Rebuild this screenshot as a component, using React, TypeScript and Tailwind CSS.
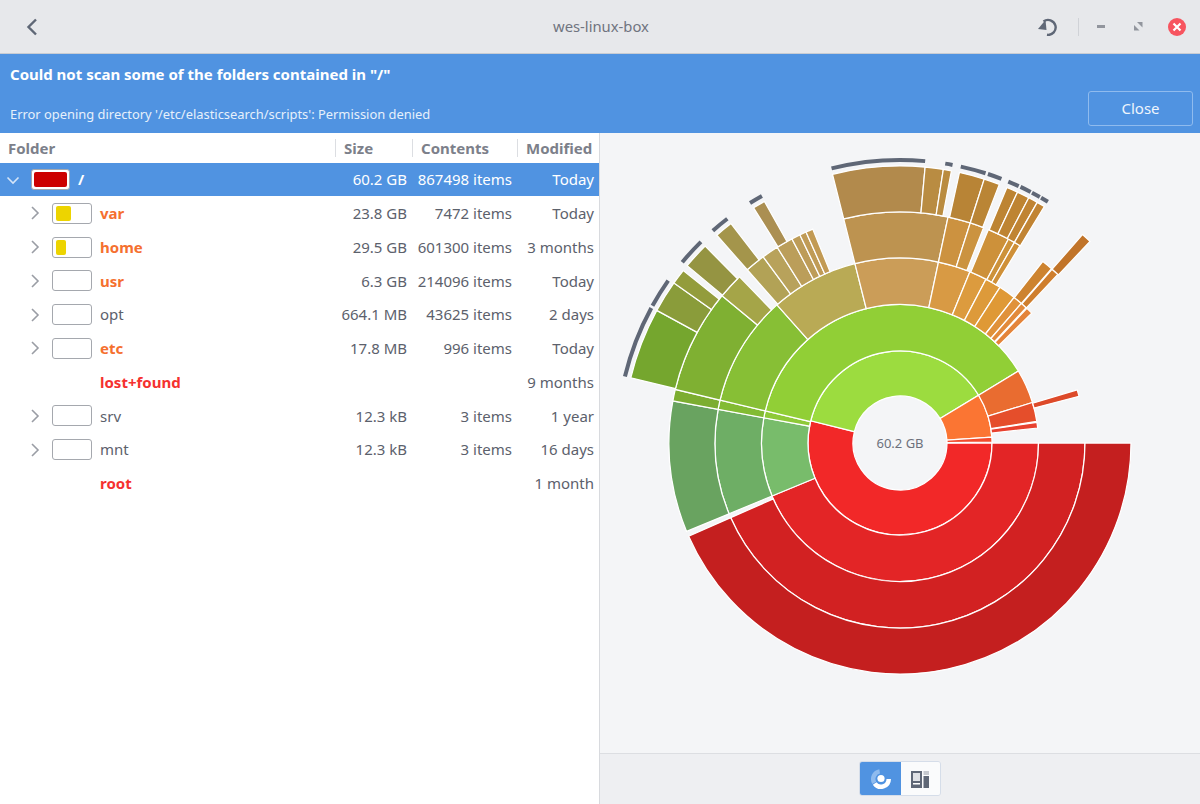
import React from "react";

// [r0, r1, startDeg, endDeg, fill] angles counter-clockwise from east
type Seg = [number, number, number, number, string];

const segs: Seg[] = [
  // ring 1
  [47, 92, 166, 360, "#f22828"],
  [47, 92, 31.3, 166, "#9cdc3f"],
  [47, 92, 3.6, 31.3, "#fb7533"],
  [47, 92, 0.5, 3.6, "#f24a2c"],
  // ring 2
  [92, 138.5, 202.5, 360, "#e32526"],
  [92, 138.5, 169.5, 202.5, "#78bc6b"],
  [92, 138.5, 166.6, 169.5, "#8ec938"],
  [92, 138.5, 31.3, 166.6, "#91cf36"],
  [92, 138.5, 17, 31.3, "#e96c30"],
  [92, 138.5, 9, 17, "#e54e2b"],
  [92, 138.5, 6.2, 8.6, "#e8412f"],
  // ring 3
  [138.5, 185, 203.8, 360, "#d22122"],
  [138.5, 185, 169.5, 202.5, "#6eae65"],
  [138.5, 185, 166.6, 169.5, "#82bb33"],
  [138.5, 185, 131.7, 166.6, "#87bf35"],
  [138.5, 185, 104.1, 131.7, "#b9aa55"],
  [138.5, 185, 78, 104.1, "#cb9d58"],
  [138.5, 185, 67.8, 78, "#d89a44"],
  [138.5, 185, 62.3, 67.8, "#dc9b3e"],
  [138.5, 185, 57.3, 62.3, "#dd9a3a"],
  [138.5, 185, 51.9, 57.3, "#df9936"],
  [138.5, 185, 49, 51.9, "#e0913a"],
  [138.5, 185, 47, 49, "#e28a3b"],
  [138.5, 185, 44.6, 46.7, "#e4843a"],
  [138.5, 185, 14.6, 16.7, "#dd4a2a"],
  // ring 4
  [185, 231, 203.8, 360, "#c41f1f"],
  [185, 231, 169.5, 202.5, "#69a360"],
  [185, 231, 166.6, 169.5, "#7cad30"],
  [185, 231, 140.4, 166.6, "#7fb032"],
  [185, 231, 134, 140.4, "#a5a548"],
  [185, 231, 126.3, 131.4, "#b2a256"],
  [185, 231, 122.1, 126.3, "#b8a25b"],
  [185, 231, 117.9, 122.1, "#bb9e5a"],
  [185, 231, 115.7, 117.9, "#bd9c58"],
  [185, 231, 114, 115.7, "#c09b56"],
  [185, 231, 112.2, 114, "#c29a54"],
  [185, 231, 78, 104.1, "#bd9350"],
  [185, 231, 72.3, 78, "#cc9240"],
  [185, 231, 68.8, 72.3, "#cb9340"],
  [185, 231, 62, 67.5, "#cd913a"],
  [185, 231, 60.3, 62, "#cd923a"],
  [185, 231, 58.7, 60.3, "#cf9038"],
  [185, 231, 49, 51.8, "#cd832f"],
  [185, 231, 46.9, 48.8, "#cf7e2d"],
  // ring 5
  [231, 277, 151.4, 166.4, "#75a62e"],
  [231, 277, 144.7, 151.4, "#8a9c3a"],
  [231, 277, 141.5, 144.7, "#939c3c"],
  [231, 277, 134.7, 140.2, "#959442"],
  [231, 277, 127.6, 131.4, "#a4954b"],
  [231, 277, 119.3, 121.9, "#ab8f52"],
  [231, 277, 84.8, 104.1, "#b28a4c"],
  [231, 277, 81, 84.8, "#b98c42"],
  [231, 277, 79.3, 81, "#ba8c40"],
  [231, 277, 72.3, 77.6, "#b88436"],
  [231, 277, 69, 72.3, "#ba8535"],
  [231, 277, 64.9, 67.3, "#bd8432"],
  [231, 277, 62.3, 64.9, "#be8432"],
  [231, 277, 60.3, 62.3, "#c08433"],
  [231, 277, 58.6, 60.3, "#c18433"],
  [231, 277, 46.7, 48.8, "#c17429"],
];

// dark marks outside the last ring, for folders that go deeper
const marks: [number, number][] = [
  [151.5, 166.4],
  [145, 151],
  [134.7, 140.3],
  [127.6, 131.4],
  [119.2, 122],
  [84.9, 104],
  [79.3, 80.8],
  [72.4, 77.6],
  [69, 71.9],
  [65.2, 67.5],
  [62.5, 64.8],
  [60.4, 62.2],
  [58.5, 60.1],
];

const CX = 300;
const CY = 310;

const pt = (r: number, a: number) => {
  const t = (a * Math.PI) / 180;
  return `${(CX + r * Math.cos(t)).toFixed(2)} ${(CY - r * Math.sin(t)).toFixed(2)}`;
};

const arcPath = (r0: number, r1: number, a0: number, a1: number) => {
  const large = a1 - a0 > 180 ? 1 : 0;
  return `M${pt(r0, a0)} L${pt(r1, a0)} A${r1} ${r1} 0 ${large} 0 ${pt(r1, a1)} L${pt(r0, a1)} A${r0} ${r0} 0 ${large} 1 ${pt(r0, a0)} Z`;
};

const markPath = (r: number, a0: number, a1: number) =>
  `M${pt(r, a0)} A${r} ${r} 0 0 0 ${pt(r, a1)}`;

const Sunburst = () => (
  <svg width="600" height="620" viewBox="0 0 600 620">
    {segs.map(([r0, r1, a0, a1, fill], i) => (
      <path key={i} d={arcPath(r0, r1, a0, a1)} fill={fill} stroke="#ffffff" strokeWidth="1.25" />
    ))}
    {marks.map(([a0, a1], i) => (
      <path key={i} d={markPath(283, a0, a1)} fill="none" stroke="#5f6776" strokeWidth="4" />
    ))}
    <text
      x={CX}
      y={CY + 5}
      textAnchor="middle"
      fontFamily="'Noto Sans', sans-serif"
      fontSize="13"
      fill="#6d717c"
    >
      60.2 GB
    </text>
  </svg>
);

const Chevron = ({ open, light }: { open?: boolean; light?: boolean }) => (
  <svg width="14" height="14" viewBox="0 0 14 14" fill="none">
    <path
      d={open ? "M1.5 4.5 L7 10 L12.5 4.5" : "M4 1 L10 7 L4 13"}
      stroke={light ? "#d5e5f8" : "#9a9da5"}
      strokeWidth="1.6"
    />
  </svg>
);

type Row = {
  name: string;
  color: string;
  size: string;
  contents: string;
  modified: string;
  fill?: number;
  noBox?: boolean;
};

const rows: Row[] = [
  { name: "var", color: "text-[#f5702f] font-bold", size: "23.8 GB", contents: "7472 items", modified: "Today", fill: 15 },
  { name: "home", color: "text-[#f5702f] font-bold", size: "29.5 GB", contents: "601300 items", modified: "3 months", fill: 10 },
  { name: "usr", color: "text-[#f5702f] font-bold", size: "6.3 GB", contents: "214096 items", modified: "Today" },
  { name: "opt", color: "text-[#5c616c]", size: "664.1 MB", contents: "43625 items", modified: "2 days" },
  { name: "etc", color: "text-[#f5702f] font-bold", size: "17.8 MB", contents: "996 items", modified: "Today" },
  { name: "lost+found", color: "text-[#f5312f] font-bold", size: "", contents: "", modified: "9 months", noBox: true },
  { name: "srv", color: "text-[#5c616c]", size: "12.3 kB", contents: "3 items", modified: "1 year" },
  { name: "mnt", color: "text-[#5c616c]", size: "12.3 kB", contents: "3 items", modified: "16 days" },
  { name: "root", color: "text-[#f5312f] font-bold", size: "", contents: "", modified: "1 month", noBox: true },
];

const cols = "grid grid-cols-[335px_77px_105px_82px]";

const HeaderCell = ({ label, sep }: { label: string; sep?: boolean }) => (
  <div className="flex items-center h-full">
    {sep && <div className="w-px h-[18px] bg-[#dcdee2] mr-2" />}
    <span className={sep ? "" : "pl-2"}>{label}</span>
  </div>
);

export default function App() {
  return (
    <div className="w-[1200px] h-[804px] flex flex-col overflow-hidden bg-white font-['Noto_Sans',sans-serif] text-[15px] text-[#5c616c]">
      {/* title bar */}
      <div className="h-[54px] shrink-0 flex items-center bg-[#e7e8eb] border-b border-[#c8ccd3]">
        <div className="w-[553px] pl-[26px]">
          <svg width="12" height="18" viewBox="0 0 12 18" fill="none">
            <path d="M10 1.5 L2.5 9 L10 16.5" stroke="#5f6776" strokeWidth="2.4" />
          </svg>
        </div>
        <div className="w-[95px] -mt-px text-center text-[14.8px] text-[#70747f] whitespace-nowrap">wes-linux-box</div>
        <div className="flex-1 flex items-center justify-end pr-[14px]">
          <svg width="20" height="18" viewBox="0 0 20 18" fill="none" className="mr-[20px]">
            <path d="M5.5 3.5 A7.5 7.5 0 1 1 9 16.8" stroke="#5f6776" strokeWidth="2.4" />
            <path d="M0 11 L7.5 2 L8.5 12 Z" fill="#5f6776" />
          </svg>
          <div className="w-px h-[18px] bg-[#d0d2d7] mr-[18px]" />
          <div className="w-2 h-[3px] bg-[#92959d] mr-[29px]" />
          <svg width="9" height="9" viewBox="0 0 9 9" className="mr-[25px]">
            <path d="M3 0 H8.5 V5.5 Z" fill="#92959d" />
            <path d="M0 3 V8.5 H5.5 Z" fill="#92959d" />
          </svg>
          <div className="w-[18px] h-[18px] rounded-full bg-[#f7545f] flex items-center justify-center">
            <svg width="10" height="10" viewBox="0 0 10 10">
              <path d="M1.5 1.5 L8.5 8.5 M8.5 1.5 L1.5 8.5" stroke="#ffffff" strokeWidth="2.2" />
            </svg>
          </div>
        </div>
      </div>

      {/* info bar */}
      <div className="h-[79px] shrink-0 flex bg-[#5093e1] text-white">
        <div className="flex-1 pl-[10px] flex flex-col">
          <div className="mt-[10px] font-bold text-[15px] leading-5">Could not scan some of the folders contained in "/"</div>
          <div className="mt-[21px] text-[12.9px] leading-[18px] text-[#e6f0fb]">
            Error opening directory '/etc/elasticsearch/scripts': Permission denied
          </div>
        </div>
        <div className="mt-[37px] mr-[7px] w-[105px] h-[35px] flex items-center justify-center rounded-[3px] border border-[#8fbbee] text-[15px] text-[#eef5fd]">
          Close
        </div>
      </div>

      <div className="flex-1 flex min-h-0">
        {/* folder table */}
        <div className="w-[600px] shrink-0 border-r border-[#d8dade]">
          <div className={`${cols} h-[30px] items-center font-bold text-[15px] text-[#7c808a]`}>
            <HeaderCell label="Folder" />
            <HeaderCell label="Size" sep />
            <HeaderCell label="Contents" sep />
            <HeaderCell label="Modified" sep />
          </div>
          <div className={`${cols} h-[33.4px] items-center bg-[#5093e1] text-white`}>
            <div className="flex items-center pl-[6px]">
              <Chevron open light />
              <div className="ml-[11px] w-[39px] h-[21px] rounded-[3px] border border-[#a5a8ae] bg-white p-[2px]">
                <div className="h-full rounded-[2px] bg-[#cc0000]" />
              </div>
              <span className="ml-2 font-bold">/</span>
            </div>
            <div className="text-right pr-[5px]">60.2 GB</div>
            <div className="text-right pr-[5px] whitespace-nowrap">867498 items</div>
            <div className="text-right pr-[5px]">Today</div>
          </div>
          {rows.map((r) => (
            <div key={r.name} className={`${cols} h-[33.75px] items-center`}>
              <div className="flex items-center pl-[28px]">
                <div className="w-[14px] flex">{!r.noBox && <Chevron />}</div>
                <div className="ml-[10px] w-[40px] h-[21px]">
                  {!r.noBox && (
                    <div className="w-[40px] h-[21px] rounded-[3px] border-[1.5px] border-[#a5a8ae] bg-white py-[2px] px-[3px]">
                      {r.fill && (
                        <div className="h-full rounded-[2px] bg-[#edd400]" style={{ width: r.fill }} />
                      )}
                    </div>
                  )}
                </div>
                <span className={`ml-2 ${r.color}`}>{r.name}</span>
              </div>
              <div className="text-right pr-[5px] whitespace-nowrap">{r.size}</div>
              <div className="text-right pr-[5px] whitespace-nowrap">{r.contents}</div>
              <div className="text-right pr-[5px] whitespace-nowrap">{r.modified}</div>
            </div>
          ))}
        </div>

        {/* chart panel */}
        <div className="flex-1 flex flex-col bg-[#f4f5f7]">
          <div className="flex-1 flex items-center justify-center min-h-0">
            <Sunburst />
          </div>
          <div className="h-[51px] shrink-0 flex items-start justify-center pt-[7px] bg-[#eeeff2] border-t border-[#dcdee2]">
            <div className="flex h-[35px] w-[82px] rounded-[3px] overflow-hidden border border-[#d5dde9]">
              <div className="w-[41px] bg-[#5093e1] flex items-center justify-center">
                <svg width="22" height="22" viewBox="0 0 22 22" fill="none">
                  <path d="M2.3 16 A10 10 0 0 1 9.3 1.15 L10 5.6 A5.5 5.5 0 0 0 6.2 13.75 Z" fill="#8fbbee" />
                  <path d="M21 11 A10 10 0 0 1 2.8 16.7 L6.5 14.2 A5.5 5.5 0 0 0 16.5 11 Z" fill="#ffffff" />
                  <circle cx="11" cy="10.5" r="3.6" fill="#ffffff" />
                </svg>
              </div>
              <div className="flex-1 bg-[#fafbfc] flex items-center justify-center pr-[2px]">
                <svg width="18" height="18" viewBox="0 0 18 18">
                  <path d="M0 1 H11 V18 H0 Z" fill="#5f6776" />
                  <path d="M2 3 H9 V11 H2 Z" fill="#dfe1e5" />
                  <path d="M2 13 H9 V14.5 H2 Z" fill="#ffffff" />
                  <path d="M12.5 1 H18 V5 H12.5 Z" fill="#c5c8ce" />
                  <path d="M12.5 6 H18 V18 H12.5 Z" fill="#5f6776" />
                </svg>
              </div>
            </div>
          </div>
        </div>
      </div>
    </div>
  );
}
